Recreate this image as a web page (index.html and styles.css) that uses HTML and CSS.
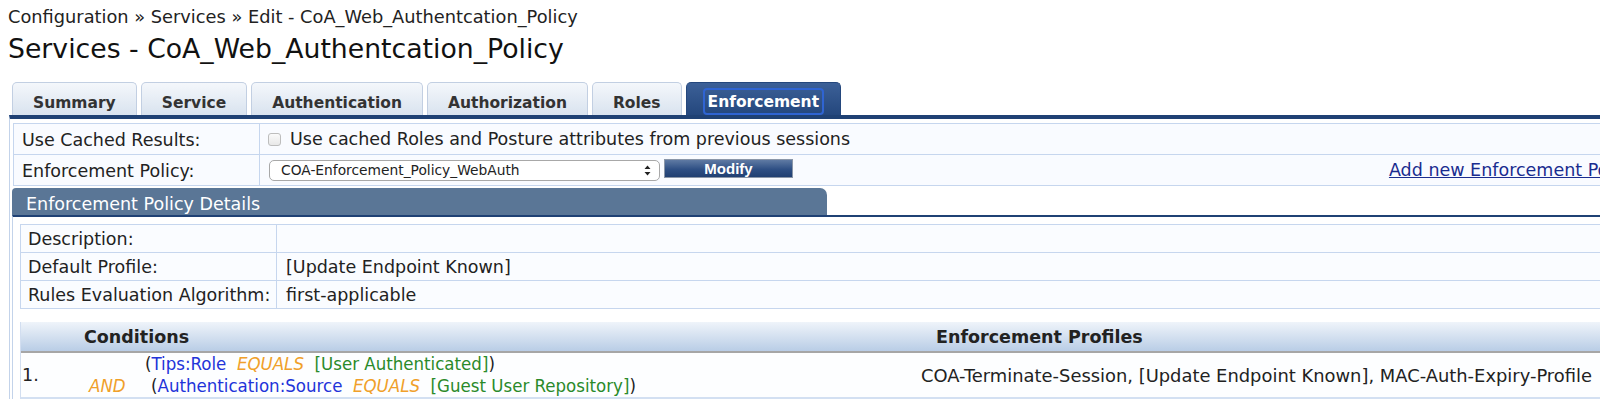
FILE: index.html
```html
<!DOCTYPE html>
<html lang="en">
<head>
<meta charset="utf-8">
<title>Services - CoA_Web_Authentcation_Policy</title>
<link rel="stylesheet" href="styles.css">
</head>
<body>
<div class="page">
  <div class="crumb">Configuration » Services » Edit - CoA_Web_Authentcation_Policy</div>
  <h1 class="title">Services - CoA_Web_Authentcation_Policy</h1>

  <div class="tabs">
    <div class="tab">Summary</div>
    <div class="tab">Service</div>
    <div class="tab">Authentication</div>
    <div class="tab">Authorization</div>
    <div class="tab">Roles</div>
    <div class="tab active"><span class="ring">Enforcement</span></div>
  </div>

  <div class="panel">
    <div class="form">
      <div class="frow">
        <div class="flabel">Use Cached Results:</div>
        <div class="fval"><span class="cb"></span>Use cached Roles and Posture attributes from previous sessions</div>
      </div>
      <div class="frow">
        <div class="flabel">Enforcement Policy:</div>
        <div class="fval">
          <div class="select">
            <span class="sel-text">COA-Enforcement_Policy_WebAuth</span>
            <svg class="sel-arrows" width="7" height="11" viewBox="0 0 7 11"><path d="M3.5 0.5 L6.5 4 H0.5 Z M3.5 10.5 L6.5 7 H0.5 Z" fill="#222"/></svg>
          </div>
          <button class="btn">Modify</button>
          <a class="addlink" href="#">Add new Enforcement Policy</a>
        </div>
      </div>
    </div>

    <div class="sect">
      <div class="sect-tab">Enforcement Policy Details</div>
      <div class="sect-body">
        <div class="details">
          <div class="drow"><div class="dlabel">Description:</div><div class="dval"></div></div>
          <div class="drow"><div class="dlabel">Default Profile:</div><div class="dval">[Update Endpoint Known]</div></div>
          <div class="drow"><div class="dlabel">Rules Evaluation Algorithm:</div><div class="dval">first-applicable</div></div>
        </div>

        <div class="rules">
          <div class="rhead">
            <div class="rh-num"></div>
            <div class="rh-cond">Conditions</div>
            <div class="rh-prof">Enforcement Profiles</div>
          </div>
          <div class="rrow">
            <div class="r-num">1.</div>
            <div class="r-cond">
              <div class="op"></div>
              <div class="expr">(<span class="attr">Tips:Role</span>&nbsp; <span class="oper">EQUALS</span>&nbsp; <span class="val">[User Authenticated]</span>)</div>
              <div class="op"><span class="oper">AND</span></div>
              <div class="expr second">(<span class="attr">Authentication:Source</span>&nbsp; <span class="oper">EQUALS</span>&nbsp; <span class="val">[Guest User Repository]</span>)</div>
            </div>
            <div class="r-prof">COA-Terminate-Session, [Update Endpoint Known], MAC-Auth-Expiry-Profile</div>
          </div>
        </div>
      </div>
    </div>
  </div>
</div>
</body>
</html>
```

FILE: styles.css
```css
* { box-sizing: border-box; }
html, body { margin: 0; padding: 0; background: #fff; overflow: hidden; }
body {
  font-family: "DejaVu Sans", Verdana, sans-serif;
  font-size: 17.5px;
  color: #222;
}
.page { width: 1660px; padding: 7px 0 0 8px; }

.crumb { font-size: 17.8px; line-height: 20px; color: #222; }
.title { font-size: 26.7px; font-weight: normal; line-height: 32px; margin: 6px 0 0; color: #111; }

/* tabs */
.tabs { display: flex; gap: 4px; margin: 17px 0 0 4px; height: 33px; align-items: flex-end; }
.tab {
  height: 33px;
  padding: 10px 20px 0;
  border: 1px solid #c2cfe2;
  border-bottom: none;
  border-radius: 5px 5px 0 0;
  background: linear-gradient(#f4f7fb, #d9e3ef);
  font-weight: bold;
  font-size: 15.5px;
  line-height: 20px;
  color: #333;
}
.tab.active {
  padding: 5px 16px 0;
  background: linear-gradient(#3c6097, #24477d);
  border-color: #24477d;
  color: #fff;
}
.ring {
  display: block;
  border: 2px solid #2f64d2;
  border-radius: 4px;
  padding: 3px 3px 2px;
  line-height: 18px;
}

/* panel */
.panel {
  border-top: 4px solid #1f4174;
  border-left: 1px solid #c3d3ea;
  margin-left: 1px;
  padding: 4px 0 0 2px;
}
.form { margin-left: 1px; border-top: 1px solid #c6d6ee; border-left: 1px solid #c6d6ee; }
.frow { display: flex; height: 31px; border-bottom: 1px solid #c6d6ee; background: #f9fbff; }
.flabel { width: 246px; padding-left: 8px; border-right: 1px solid #c6d6ee; display: flex; align-items: center; padding-top: 1px; }
.fval { flex: 1; display: flex; align-items: center; padding-left: 8px; padding-right: 22px; }
.cb {
  width: 13px; height: 13px;
  border: 1px solid #bdbdbd;
  border-radius: 3px;
  background: linear-gradient(#fafafa, #e8e8e8);
  margin-right: 9px;
}
.select {
  width: 391px; height: 21px;
  margin-left: 1px;
  border: 1px solid #a8a8a8;
  border-radius: 5px;
  background: #fff;
  display: flex; align-items: center; justify-content: space-between;
  padding: 0 8px 0 11px;
  font-size: 13.8px;
}
.sel-arrows { display: block; }
.btn {
  margin-left: 4px;
  width: 129px; height: 19px;
  margin-bottom: 3px;
  border: 1px solid #8a96a8;
  background: linear-gradient(#5f7aa3, #2e4f84 55%, #203f72);
  color: #fff;
  font-family: "Liberation Sans", Arial, sans-serif;
  font-weight: bold;
  font-size: 15px;
  line-height: 17px;
  padding: 0;
}
.addlink { margin-left: auto; color: #1a2c8f; text-decoration: underline; }

/* section */
.sect { margin-top: 2px; }
.sect-tab {
  width: 815px; height: 27px;
  background: #5a7696;
  border-radius: 4px 7px 0 0;
  color: #fff;
  padding: 4px 0 0 14px;
  display: flex;
  align-items: center;
}
.sect-body {
  border-top: 2px solid #1f4174;
  border-left: 1px solid #c3d3ea;
  padding: 7px 0 0 7px;
}
.details { border: 1px solid #c6d6ee; border-bottom: none; }
.drow { display: flex; height: 28px; border-bottom: 1px solid #c6d6ee; background: #fafcff; }
.dlabel { width: 256px; padding-left: 7px; border-right: 1px solid #c6d6ee; display: flex; align-items: center; }
.dval { flex: 1; padding-left: 9px; display: flex; align-items: center; }

.rules { margin-top: 13px; border-left: 1px solid #d2def0; }
.rhead {
  display: grid; grid-template-columns: 49px 842px 1fr;
  height: 31px;
  background: linear-gradient(#eff4fa, #b9cde6);
  border-bottom: 2px solid #a6a6a6;
  font-weight: bold;
  align-items: center;
}
.rh-cond { padding-left: 14px; }
.rh-prof { padding-left: 24px; }
.rrow {
  display: grid; grid-template-columns: 49px 842px 1fr;
  height: 46px;
  background: #fdfeff;
  border-bottom: 2px solid #d3e0f2;
  align-items: center;
}
.r-num { padding-left: 1px; }
.r-cond {
  display: grid; grid-template-columns: 75px auto;
  font-family: "DejaVu Sans Condensed", Tahoma, sans-serif;
  font-size: 18.5px;
  line-height: 22px;
  justify-content: start;
}
.op { padding-left: 19px; }
.expr.second { padding-left: 6px; }
.attr { color: #2233d9; }
.oper { color: #f0a02a; font-style: italic; }
.val { color: #2a8a2a; }
.r-prof { padding-left: 9px; font-size: 17.9px; }
```
